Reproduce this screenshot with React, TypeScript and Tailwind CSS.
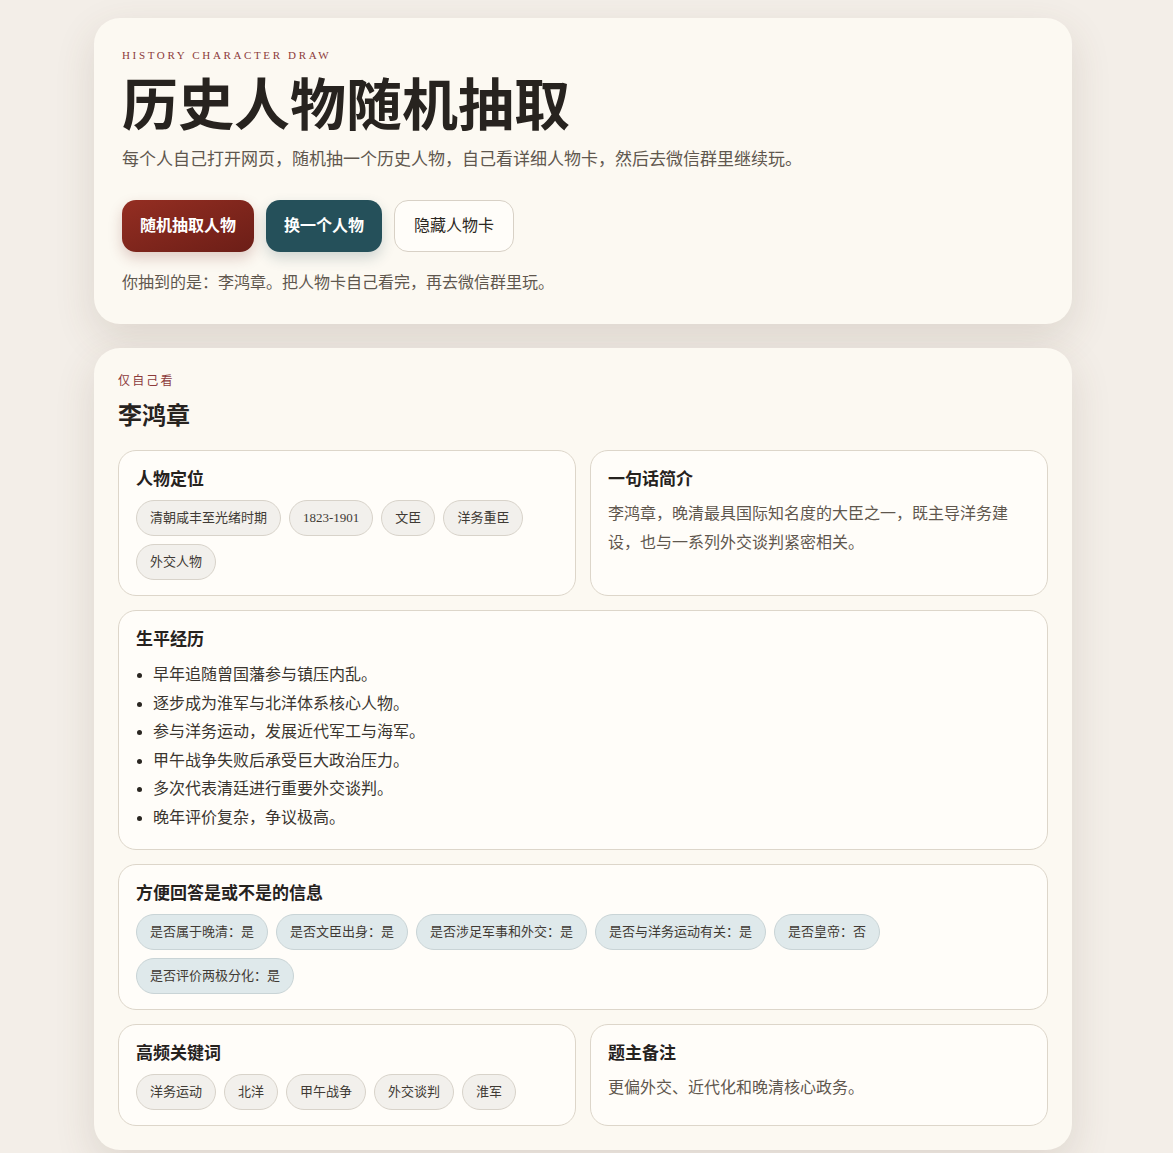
import React from "react";

const serif = {
  fontFamily:
    '"Liberation Serif", "Noto Sans CJK SC", serif',
};

const positioning = ["清朝咸丰至光绪时期", "1823-1901", "文臣", "洋务重臣", "外交人物"];

const life = [
  "早年追随曾国藩参与镇压内乱。",
  "逐步成为淮军与北洋体系核心人物。",
  "参与洋务运动，发展近代军工与海军。",
  "甲午战争失败后承受巨大政治压力。",
  "多次代表清廷进行重要外交谈判。",
  "晚年评价复杂，争议极高。",
];

const yesNo = [
  "是否属于晚清：是",
  "是否文臣出身：是",
  "是否涉足军事和外交：是",
  "是否与洋务运动有关：是",
  "是否皇帝：否",
  "是否评价两极分化：是",
];

const keywords = ["洋务运动", "北洋", "甲午战争", "外交谈判", "淮军"];

function Chip({ children, tone = "plain" }: { children: React.ReactNode; tone?: "plain" | "blue" }) {
  const cls =
    tone === "blue"
      ? "bg-[#dfe9eb] border-[#c9d4d6]"
      : "bg-[#f2f0ec] border-[#d8d3ca]";
  return (
    <span
      className={`inline-flex h-9 items-center rounded-full border px-[13px] text-[13px] text-[#3f3a34] ${cls}`}
    >
      {children}
    </span>
  );
}

function Panel({ title, children, className = "" }: { title: string; children: React.ReactNode; className?: string }) {
  return (
    <section
      className={`rounded-[18px] border border-[#ddd6ca] bg-[#fffdf9] px-[17px] pt-[17px] pb-[15px] ${className}`}
    >
      <h3 className="text-[17px] leading-6 font-bold text-[#26221e]">{title}</h3>
      {children}
    </section>
  );
}

export default function App() {
  return (
    <div style={serif} className="min-h-screen bg-[#f3eee8] pt-[18px] pb-[4px]">
      <div className="ml-[94px] flex w-[978px] flex-col gap-6">
        {/* header card */}
        <header className="rounded-[26px] bg-[#fcf9f2] px-7 pt-[29px] pb-[29px] shadow-[0_14px_40px_rgba(90,70,50,0.14)]">
          <p className="text-[11px] leading-4 tracking-[0.24em] text-[#8c3b3b]">
            HISTORY CHARACTER DRAW
          </p>
          <h1 className="mt-3 text-[56px] leading-[62px] font-bold text-[#27231f]">
            历史人物随机抽取
          </h1>
          <p className="mt-[10px] text-[17px] leading-[26px] text-[#5f574e]">
            每个人自己打开网页，随机抽一个历史人物，自己看详细人物卡，然后去微信群里继续玩。
          </p>
          <div className="mt-[27px] flex gap-3">
            <button className="h-[52px] rounded-[14px] bg-gradient-to-br from-[#942e22] to-[#6c1e17] px-[18px] text-[16px] font-bold text-white shadow-[0_6px_14px_rgba(120,40,30,0.22)]">
              随机抽取人物
            </button>
            <button className="h-[52px] rounded-[14px] bg-[#25505a] px-[18px] text-[16px] font-bold text-white shadow-[0_6px_14px_rgba(30,70,80,0.2)]">
              换一个人物
            </button>
            <button className="h-[52px] rounded-[14px] border border-[#d8d1c6] bg-[#fffdf9] px-[19px] text-[16px] text-[#2c2823]">
              隐藏人物卡
            </button>
          </div>
          <p className="mt-[19px] text-[16px] leading-6 text-[#5f574e]">
            你抽到的是：李鸿章。把人物卡自己看完，再去微信群里玩。
          </p>
        </header>

        {/* character card */}
        <main className="rounded-[26px] bg-[#fcf9f2] px-6 pt-6 pb-6 shadow-[0_14px_40px_rgba(90,70,50,0.14)]">
          <p className="text-[12px] leading-[18px] tracking-[0.18em] text-[#8c3b3b]">仅自己看</p>
          <h2 className="mt-[10px] text-[24px] leading-8 font-bold text-[#27231f]">李鸿章</h2>

          <div className="mt-[18px] grid grid-cols-2 gap-[14px]">
            <Panel title="人物定位">
              <div className="mt-2 flex flex-wrap gap-x-2 gap-y-2">
                {positioning.map((t) => (
                  <Chip key={t}>{t}</Chip>
                ))}
              </div>
            </Panel>

            <Panel title="一句话简介">
              <p className="mt-[7px] max-w-[410px] text-[16px] leading-[29px] text-[#5f574e]">
                李鸿章，晚清最具国际知名度的大臣之一，既主导洋务建设，也与一系列外交谈判紧密相关。
              </p>
            </Panel>

            <Panel title="生平经历" className="col-span-2">
              <ul className="mt-[9px] mb-[1px] list-disc pl-[17px] text-[16px] leading-[28.6px] text-[#3a352f] marker:text-[#2a2621]">
                {life.map((t) => (
                  <li key={t}>{t}</li>
                ))}
              </ul>
            </Panel>

            <Panel title="方便回答是或不是的信息" className="col-span-2">
              <div className="mt-2 flex flex-wrap gap-x-2 gap-y-2">
                {yesNo.map((t) => (
                  <Chip key={t} tone="blue">
                    {t}
                  </Chip>
                ))}
              </div>
            </Panel>

            <Panel title="高频关键词">
              <div className="mt-2 flex flex-wrap gap-x-2 gap-y-2">
                {keywords.map((t) => (
                  <Chip key={t}>{t}</Chip>
                ))}
              </div>
            </Panel>

            <Panel title="题主备注">
              <p className="mt-[7px] text-[16px] leading-[29px] text-[#5f574e]">
                更偏外交、近代化和晚清核心政务。
              </p>
            </Panel>
          </div>
        </main>
      </div>
    </div>
  );
}
